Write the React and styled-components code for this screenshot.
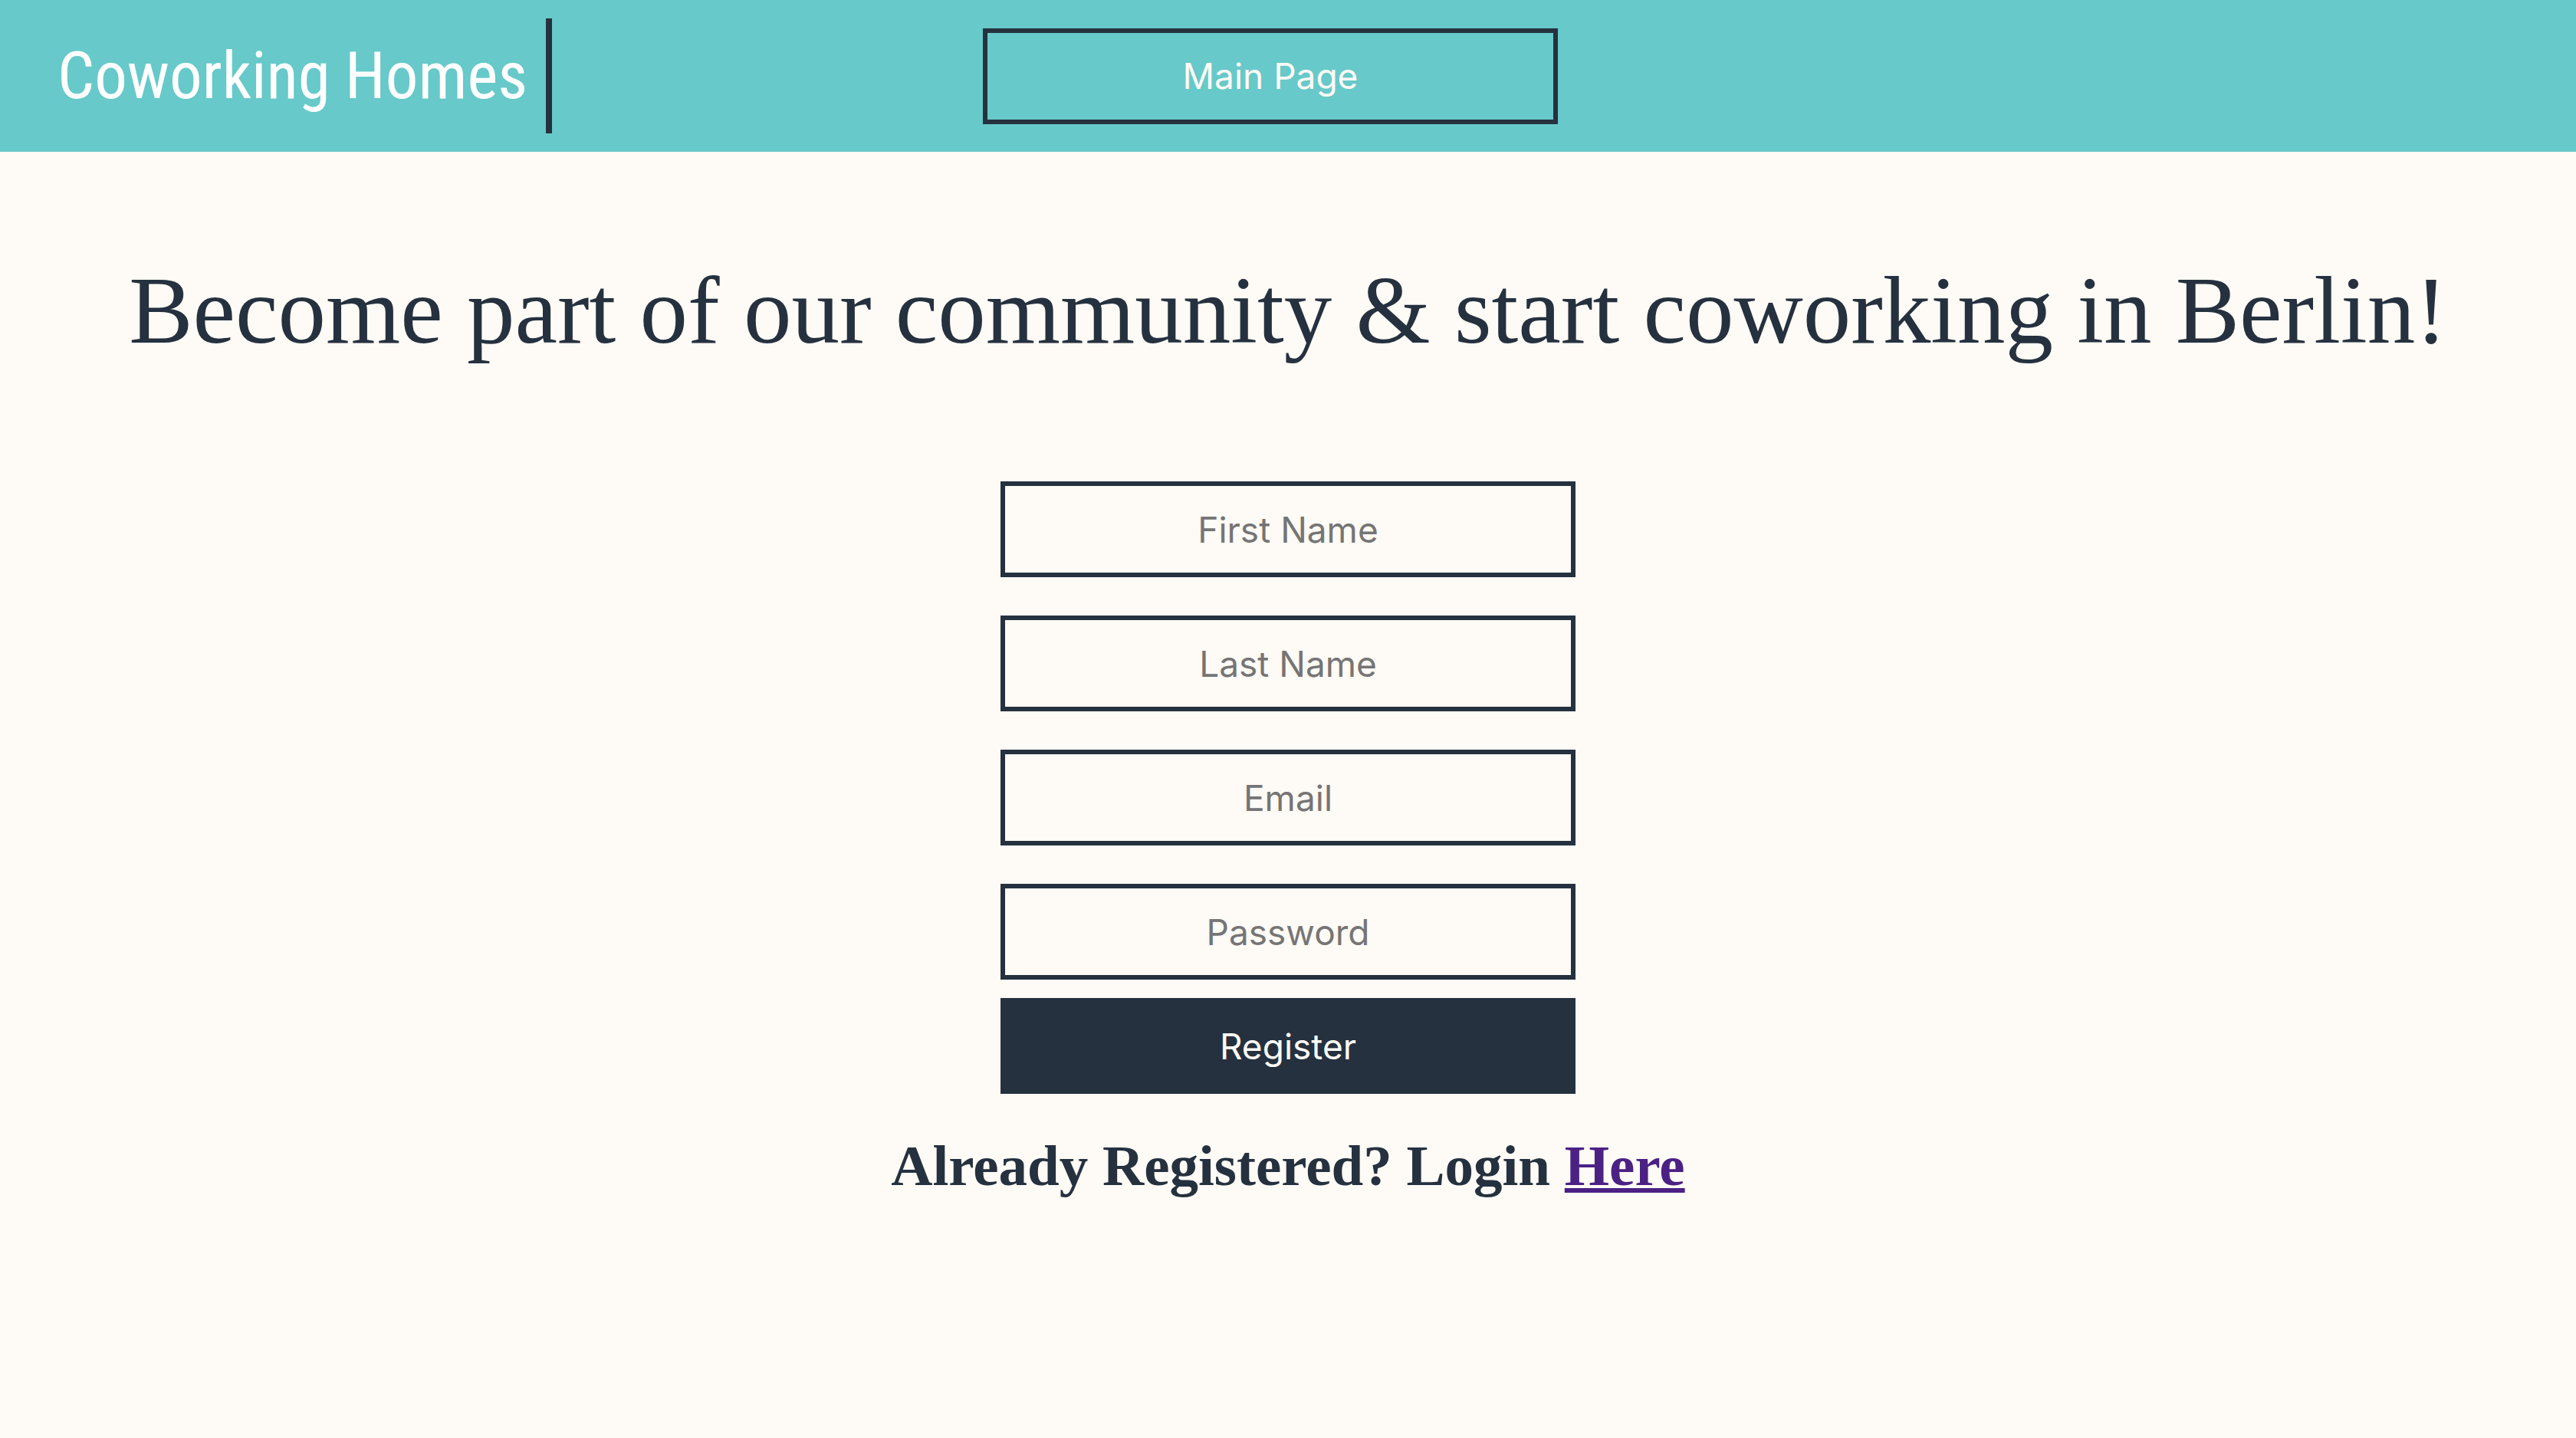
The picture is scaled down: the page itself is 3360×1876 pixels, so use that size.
import React from "react";
import styled, { createGlobalStyle } from "styled-components";

const colors = {
  teal: "#67c9c9",
  navy: "#25313f",
  cream: "#fefaf5",
  placeholder: "#757575",
  visited: "#4c2184",
};

const serif = `"Liberation Serif", "Times New Roman", serif`;
const sans = `Inter, "Liberation Sans", sans-serif`;

const GlobalStyle = createGlobalStyle`
  *, *::before, *::after {
    box-sizing: border-box;
  }

  body {
    margin: 0;
    background: ${colors.cream};
    color: ${colors.navy};
    font-family: ${serif};
  }
`;

const Header = styled.header`
  display: grid;
  grid-template-columns: 1fr auto 1fr;
  align-items: center;
  padding: 24px 46px 24px 0;
  background: ${colors.teal};
`;

const Logo = styled.div`
  justify-self: start;
  margin-left: 75px;
  padding-right: 24px;
  border-right: 8px solid ${colors.navy};
  color: #ffffff;
  font-family: "Roboto Condensed", "Liberation Sans", sans-serif;
  font-size: 85px;
  font-weight: 400;
  line-height: 150px;
  white-space: nowrap;
`;

const Button = styled.button`
  width: 750px;
  max-width: 100%;
  height: 125px;
  padding: 0 24px;
  border: 6px solid ${colors.navy};
  border-radius: 0;
  background: ${(p) => (p.$filled ? colors.navy : "transparent")};
  color: ${colors.cream};
  font-family: ${sans};
  font-size: 46px;
  text-align: center;
  cursor: pointer;
`;

const Main = styled.main`
  display: flex;
  flex-direction: column;
  align-items: center;
`;

const Title = styled.h1`
  margin: 0;
  padding: 124px 24px 140px;
  font-size: 125px;
  font-weight: 400;
  line-height: 166px;
  text-align: center;
`;

const Form = styled.form`
  display: flex;
  flex-direction: column;
  align-items: center;
  gap: 24px;
`;

const Fields = styled.div`
  display: flex;
  flex-direction: column;
  gap: 50px;
`;

const Input = styled.input`
  width: 750px;
  max-width: 100%;
  height: 125px;
  padding: 0 24px;
  border: 6px solid ${colors.navy};
  border-radius: 0;
  background: transparent;
  color: ${colors.navy};
  font-family: ${sans};
  font-size: 46px;
  text-align: center;

  &::placeholder {
    color: ${colors.placeholder};
    opacity: 1;
  }
`;

const LoginHint = styled.h2`
  margin: 0;
  padding: 50px 24px;
  font-size: 75px;
  font-weight: 700;
  line-height: 88px;
  text-align: center;
`;

const LoginLink = styled.a`
  color: ${colors.visited};
  text-decoration: underline;
  text-decoration-thickness: 6px;
  text-underline-offset: 4px;
  text-decoration-skip-ink: none;
`;

const fields = [
  { name: "firstName", type: "text", label: "First Name" },
  { name: "lastName", type: "text", label: "Last Name" },
  { name: "email", type: "email", label: "Email" },
  { name: "password", type: "password", label: "Password" },
];

export default function App() {
  return (
    <>
      <GlobalStyle />
      <Header>
        <Logo>Coworking Homes</Logo>
        <Button type="button">Main Page</Button>
      </Header>
      <Main>
        <Title>Become part of our community &amp; start coworking in Berlin!</Title>
        <Form onSubmit={(event) => event.preventDefault()}>
          <Fields>
            {fields.map((field) => (
              <Input
                key={field.name}
                name={field.name}
                type={field.type}
                placeholder={field.label}
                aria-label={field.label}
              />
            ))}
          </Fields>
          <Button type="submit" $filled>
            Register
          </Button>
        </Form>
        <LoginHint>
          Already Registered? Login <LoginLink href="#login">Here</LoginLink>
        </LoginHint>
      </Main>
    </>
  );
}
